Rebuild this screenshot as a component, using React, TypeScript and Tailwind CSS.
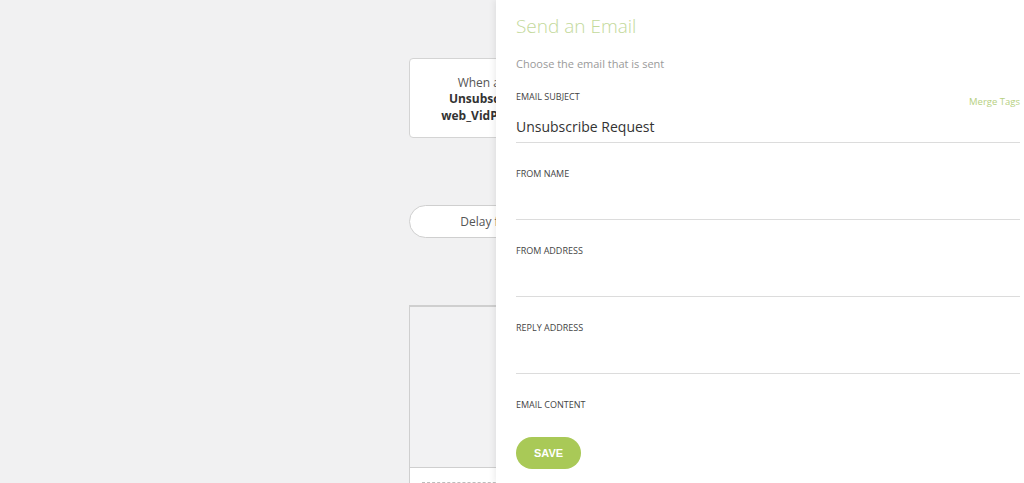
import React from 'react';

const font = { fontFamily: '"Open Sans", "Liberation Sans", sans-serif' };

const fields = ['From Name', 'From Address', 'Reply Address'];

function Canvas() {
  return (
    <div className="flex flex-col items-center w-full pt-[58px]">
      {/* Trigger */}
      <div className="w-[206px] h-[80px] bg-white border border-[#d4d4d4] rounded-[4px] flex flex-col items-center justify-center pt-[3px] text-[12px] leading-[16.5px] text-[#333]">
        <span className="text-[#555]">When a contact fills</span>
        <span className="font-bold">Unsubscribe Request</span>
        <span className="font-bold">web_VidProspects_form</span>
      </div>

      {/* Delay */}
      <div className="mt-[67px] w-[206px] h-[33px] bg-white border border-[#cfcfcf] rounded-full flex items-center justify-center text-[12px] text-[#555]">
        Delay for 1 minute
      </div>

      {/* Email step */}
      <div className="mt-[67px] w-[206px] flex flex-col">
        <div className="h-[162px] bg-[#f2f2f3] border-t-2 border-l border-r border-[#cfcfcf]" />
        <div className="h-[40px] bg-white border-t border-l border-r border-[#cfcfcf] px-[12px] pt-[14px]">
          <div className="h-[30px] border-t border-dashed border-[#bdbdbd]" />
        </div>
      </div>
    </div>
  );
}

function Field({ label }: { label: string }) {
  return (
    <div className="mt-[25px]">
      <div className="h-[12px] text-[9px] leading-[12px] uppercase text-[#444]">{label}</div>
      <div className="h-[40px] border-b border-[#dcdcdc]" />
    </div>
  );
}

export default function App() {
  return (
    <div className="relative w-[1024px] h-[483px] overflow-hidden bg-[#f1f1f2]" style={font}>
      <Canvas />

      {/* Side panel */}
      <div className="absolute top-0 right-0 bottom-0 w-[528px] bg-white shadow-[-2px_0_6px_rgba(0,0,0,0.07)] pl-[20px] pr-[4px] pt-[12px]">
        <h2 className="h-[28px] text-[19px] leading-[28px] font-light text-[#c3d99b]">Send an Email</h2>
        <p className="mt-[16px] text-[11px] leading-[16px] text-[#9a9a9a]">Choose the email that is sent</p>

        <div className="mt-[19px]">
          <div className="flex justify-between h-[12px]">
            <span className="text-[9px] leading-[12px] uppercase text-[#444]">Email Subject</span>
            <span className="text-[9.5px] leading-[12px] text-[#b6d07f] translate-y-[5px]">Merge Tags</span>
          </div>
          <div className="h-[40px] border-b border-[#dcdcdc] pt-[14px] text-[14px] leading-[20px] text-[#333]">
            Unsubscribe Request
          </div>
        </div>

        {fields.map(f => (
          <Field key={f} label={f} />
        ))}

        <div className="mt-[25px] h-[12px] text-[9px] leading-[12px] uppercase text-[#444]">Email Content</div>

        <button className="mt-[26px] w-[65px] h-[32px] rounded-full bg-[#a9c957] text-white text-[11px] font-bold font-['Liberation_Sans',sans-serif]">
          SAVE
        </button>
      </div>
    </div>
  );
}
